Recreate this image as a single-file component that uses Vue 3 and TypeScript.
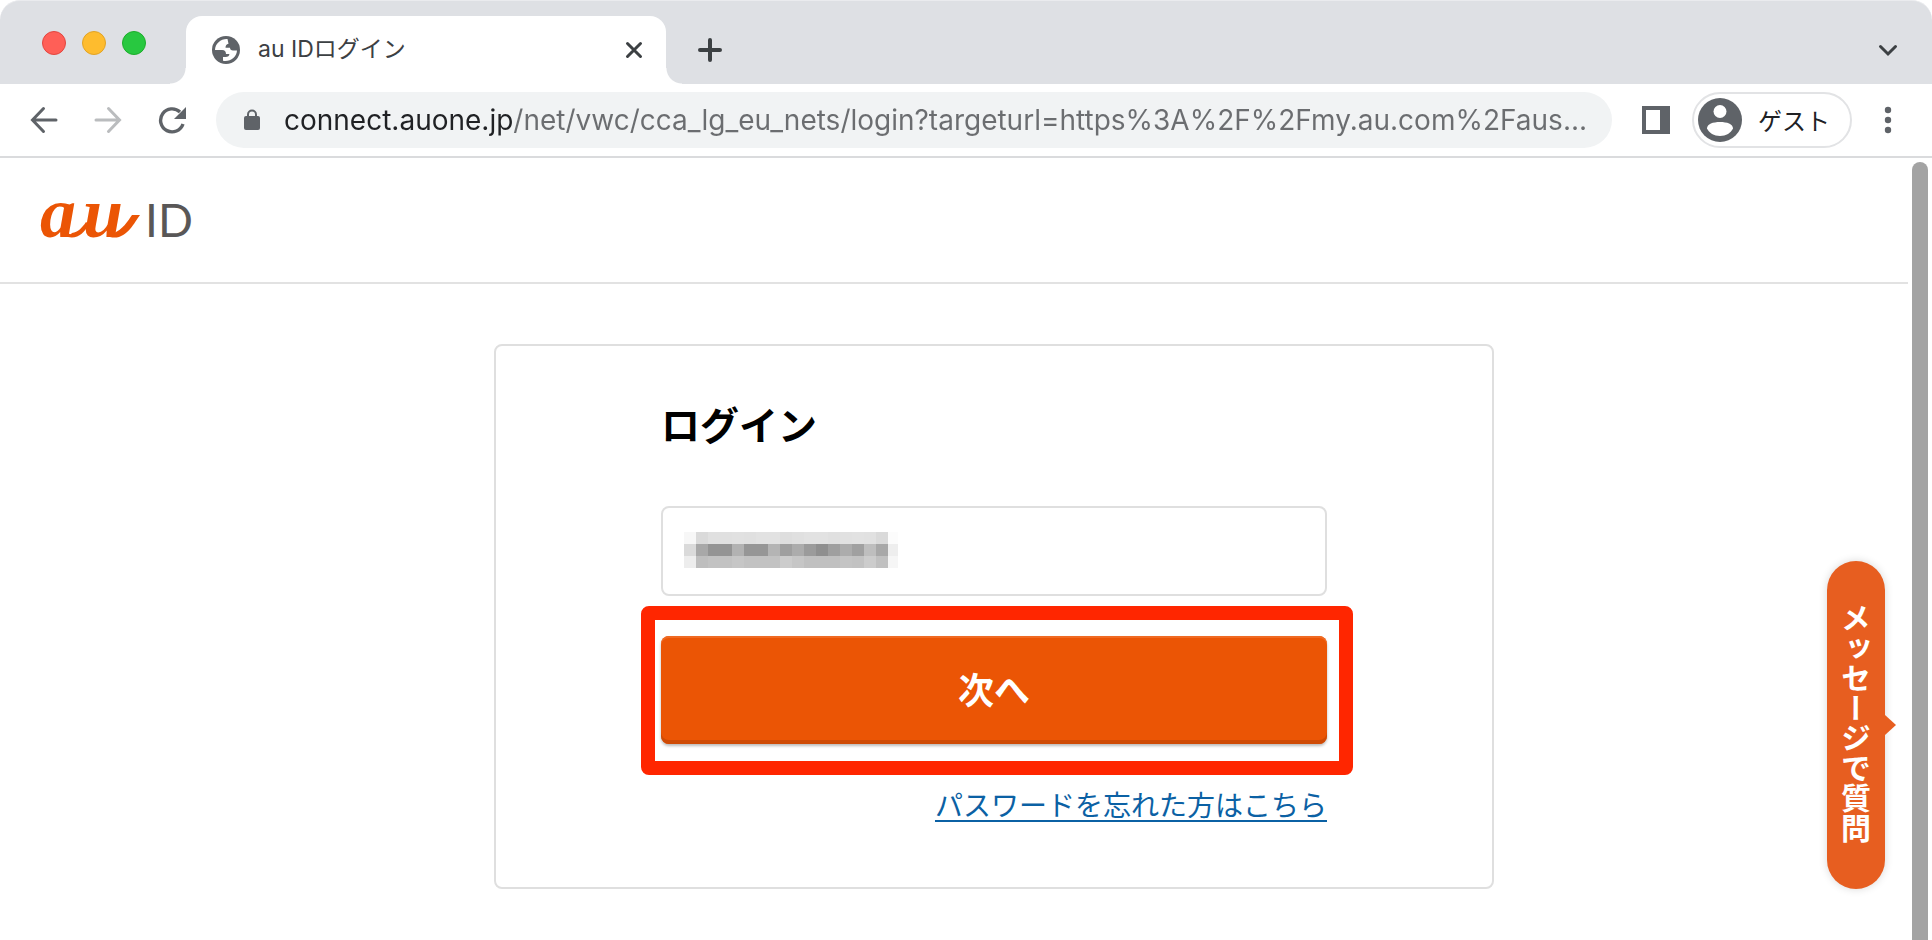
<script setup lang="ts">
import { ref } from 'vue'

const url = ref('connect.auone.jp/net/vwc/cca_lg_eu_nets/login?targeturl=https%3A%2F%2Fmy.au.com%2Faus...')
const loginId = ref('')

// Grey levels of the masked account id, one row of 12px cells per line
const maskRows: number[][] = [
  [247, 218, 224, 224, 225, 224, 226, 226, 222, 224, 226, 226, 224, 225, 226, 225, 218, 252],
  [218, 168, 148, 148, 178, 150, 150, 180, 159, 172, 155, 143, 159, 172, 160, 190, 168, 238],
  [237, 190, 194, 194, 198, 194, 194, 194, 204, 198, 192, 192, 192, 196, 194, 204, 192, 246],
]
const grey = (v: number): string => `rgb(${v},${v},${v})`
</script>

<template>
  <div class="window">
    <div class="tabstrip">
      <div class="lights">
        <button class="light red" aria-label="閉じる"></button>
        <button class="light yellow" aria-label="最小化"></button>
        <button class="light green" aria-label="最大化"></button>
      </div>
      <div class="tab">
        <svg class="globe" viewBox="0 0 28 28" aria-hidden="true">
          <circle cx="14" cy="14" r="14" fill="#5f6368" />
          <path d="M15.5 3C9 2.6 3.2 7.4 3 14h7.2c2.4 0 3.8 1.6 3.8 4h3.4c0 2-1.4 3-3.8 3H11v3.800c7 1.400 13.600-3.600 14-10.300h-4c-1.800 0-3-1-3-2.700h-4.500c0-2.200 1-3.800 3-4z" fill="#fff" />
        </svg>
        <span class="tab-title">au IDログイン</span>
        <button class="plain" aria-label="タブを閉じる">
          <svg width="20" height="20" viewBox="0 0 20 20"><path d="M3.5 3.5l13 13M16.5 3.5l-13 13" fill="none" stroke="#3c4043" stroke-width="3" stroke-linecap="round" /></svg>
        </button>
      </div>
      <button class="plain new-tab" aria-label="新しいタブ">
        <svg width="24" height="24" viewBox="0 0 24 24"><path d="M12 2v20M2 12h20" fill="none" stroke="#3c4043" stroke-width="4" stroke-linecap="round" /></svg>
      </button>
      <button class="plain tab-search" aria-label="タブを検索">
        <svg width="20" height="14" viewBox="0 0 20 14"><path d="M2.5 3.5l7.5 7.5 7.5-7.5" fill="none" stroke="#3c4043" stroke-width="3" stroke-linecap="round" /></svg>
      </button>
    </div>

    <div class="toolbar">
      <button class="plain" aria-label="戻る">
        <svg width="28" height="28" viewBox="0 0 28 28"><path d="M26 14H3M13.5 2.500L2.500 14l11 11.500" fill="none" stroke="#5f6368" stroke-width="3" stroke-linecap="round" /></svg>
      </button>
      <button class="plain" aria-label="進む" disabled>
        <svg width="28" height="28" viewBox="0 0 28 28"><path d="M2 14h23M14.5 2.500L25.500 14l-11 11.500" fill="none" stroke="#babcbe" stroke-width="3" stroke-linecap="round" /></svg>
      </button>
      <button class="plain" aria-label="再読み込み">
        <svg width="28" height="28" viewBox="0 0 28 28"><path d="M22 6A11.500 11.500 0 1 0 25 18" fill="none" stroke="#5f6368" stroke-width="3.400" /><path d="M28 1v12H16z" fill="#5f6368" /></svg>
      </button>
      <label class="omnibox">
        <svg width="16" height="22" viewBox="0 0 16 22" aria-hidden="true"><path d="M4 9V5.500a4 4 0 0 1 8 0V9" fill="none" stroke="#5f6368" stroke-width="2" /><rect y="7" width="16" height="14" rx="2" fill="#5f6368" /></svg>
        <input v-model="url" class="url" type="text" aria-label="アドレス" spellcheck="false" />
      </label>
      <button class="plain panel" aria-label="サイドパネル">
        <svg width="28" height="28" viewBox="0 0 28 28"><path d="M0 0h28v28H0zM4 4v20h14V4z" fill="#5f6368" fill-rule="evenodd" /></svg>
      </button>
      <button class="profile">
        <svg width="44" height="44" viewBox="0 0 44 44" aria-hidden="true"><circle cx="22" cy="22" r="22" fill="#5f6368" /><circle cx="22" cy="13.500" r="6.500" fill="#fff" /><path d="M9 30.500c0-4.500 6-6.500 13-6.500s13 2 13 6.500c-2 4.500-7 7.500-13 7.500s-11-3-13-7.500z" fill="#fff" /></svg>
        <span>ゲスト</span>
      </button>
      <button class="plain menu" aria-label="メニュー">
        <svg width="8" height="28" viewBox="0 0 8 28"><g fill="#5f6368"><circle cx="4" cy="4" r="3.200" /><circle cx="4" cy="14" r="3.200" /><circle cx="4" cy="24" r="3.200" /></g></svg>
      </button>
    </div>

    <div class="viewport">
      <div class="page">
        <header class="site-header">
          <a class="logo" href="#" aria-label="au ID">
            <svg width="180" height="100" viewBox="0 0 180 100">
              <text class="logo-au" x="0 43" y="67">au</text>
              <g fill="#eb5505">
                <path d="M28 67c10 2 16-4 21-13l-3-2c-4 6-8 10-14 11z" />
                <path d="M70 67c16 4 24-14 30-22h-8c-4 6-10 15-18 18z" />
              </g>
              <text class="logo-id" x="105" y="67">ID</text>
            </svg>
          </a>
        </header>
        <main>
          <form class="card" @submit.prevent>
            <h1>ログイン</h1>
            <div class="field">
              <input v-model="loginId" type="text" aria-label="au ID" />
              <svg class="mask" width="214" height="36" viewBox="0 0 214 36" shape-rendering="crispEdges" aria-hidden="true">
                <g v-for="(row, r) in maskRows" :key="r">
                  <rect v-for="(v, c) in row" :key="c" :x="c * 12" :y="r * 12" width="12" height="12" :fill="grey(v)" />
                </g>
              </svg>
            </div>
            <div class="submit-area">
              <button class="submit" type="submit">次へ</button>
            </div>
            <a class="forgot" href="#">パスワードを忘れた方はこちら</a>
          </form>
        </main>
      </div>
      <div class="scrollbar"><div class="thumb"></div></div>
      <button class="chat"><span>メッセージで質問</span></button>
    </div>
  </div>
</template>

<style>
body {
  margin: 0;
  background: #fff;
}
</style>

<style scoped>
* {
  box-sizing: border-box;
}
.window {
  display: flex;
  flex-direction: column;
  min-height: 100vh;
  background: #fff;
  font-family: Inter, "Noto Sans CJK JP", sans-serif;
  color: #000;
}
button {
  font-family: inherit;
  cursor: pointer;
}
svg {
  display: block;
}
.plain {
  display: block;
  padding: 0;
  border: 0;
  background: none;
  flex: none;
}
.tabstrip {
  display: flex;
  align-items: center;
  height: 84px;
  padding: 15px 34px 0 42px;
  background: #dee0e4;
  border-top: 1px solid #eaebee;
  border-radius: 20px 20px 0 0;
}
.lights {
  display: flex;
  gap: 16px;
  width: 144px;
  padding-bottom: 14px;
}
.light {
  width: 24px;
  height: 24px;
  padding: 0;
  border: 1px solid;
  border-radius: 50%;
}
.red {
  background: #ff5f57;
  border-color: #e2463f;
}
.yellow {
  background: #febc2e;
  border-color: #e1a325;
}
.green {
  background: #28c840;
  border-color: #1dad2b;
}
.tab {
  position: relative;
  display: flex;
  align-items: center;
  align-self: stretch;
  width: 480px;
  padding: 0 22px 0 26px;
  background: #fff;
  border-radius: 16px 16px 0 0;
}
.tab::before,
.tab::after {
  content: "";
  position: absolute;
  bottom: 0;
  width: 16px;
  height: 16px;
}
.tab::before {
  right: 100%;
  background: radial-gradient(circle at 0 0, transparent 15px, #fff 16px);
}
.tab::after {
  left: 100%;
  background: radial-gradient(circle at 100% 0, transparent 15px, #fff 16px);
}
.globe {
  width: 28px;
  height: 28px;
}
.tab-title {
  flex: 1;
  padding: 0 0 2px 18px;
  font-size: 23px;
  line-height: 32px;
  color: #3c4043;
}
.new-tab {
  margin-left: 32px;
}
.tab-search {
  margin-left: auto;
}
.toolbar {
  display: flex;
  align-items: center;
  height: 74px;
  padding: 0 40px 0 30px;
  border-bottom: 2px solid #dadbdd;
  gap: 36px;
}
.omnibox {
  display: flex;
  align-items: center;
  flex: 1;
  gap: 24px;
  height: 56px;
  margin-left: -6px;
  padding: 0 20px 0 28px;
  background: #f1f3f4;
  border-radius: 28px;
}
.url {
  flex: 1;
  min-width: 0;
  height: 40px;
  padding: 0;
  border: 0;
  outline: 0;
  font-family: inherit;
  font-size: 28px;
  color: #6b6d70;
  background: linear-gradient(90deg, #202124 229px, #6b6d70 229px);
  background-clip: text;
  -webkit-text-fill-color: transparent;
}
.panel {
  margin-left: -6px;
}
.profile {
  display: flex;
  align-items: center;
  gap: 16px;
  width: 160px;
  height: 56px;
  margin-left: -14px;
  padding: 0 0 0 4px;
  border: 2px solid #e2e3e5;
  border-radius: 28px;
  background: #fff;
  font-size: 24px;
  color: #202124;
}
.profile span {
  padding-bottom: 2px;
}
.menu {
  margin-left: -4px;
}
.viewport {
  position: relative;
  display: flex;
  flex: 1;
}
.page {
  flex: 1;
}
.site-header {
  display: flex;
  align-items: center;
  height: 126px;
  padding-left: 40px;
  border-bottom: 2px solid #e2e2e2;
}
.logo-au {
  font: italic bold 72px "Liberation Serif", serif;
  fill: #eb5505;
}
.logo-id {
  font: 46px Lato, sans-serif;
  fill: #595757;
}
main {
  display: flex;
  justify-content: center;
  padding: 60px 0 40px 80px;
}
.card {
  display: flex;
  flex-direction: column;
  width: 1000px;
  padding: 50px 165px 60px;
  border: 2px solid #dfdfdf;
  border-radius: 8px;
}
h1 {
  margin: 0 0 50px;
  font-size: 39px;
  line-height: 60px;
  font-weight: 700;
}
.field {
  position: relative;
}
.field input {
  display: block;
  width: 100%;
  height: 90px;
  padding: 0 22px;
  border: 2px solid #dfdfdf;
  border-radius: 8px;
  font: 28px Inter, "Noto Sans CJK JP", sans-serif;
  background: #fff;
}
.mask {
  position: absolute;
  left: 23px;
  top: 26px;
}
.submit-area {
  margin: 10px -26px 10px -20px;
  padding: 16px 12px 17px 6px;
  border: 14px solid #ff2600;
  border-radius: 8px;
}
.submit {
  display: block;
  width: 100%;
  height: 108px;
  padding: 0 0 4px;
  border: 0;
  border-radius: 8px;
  background: #eb5505;
  box-shadow: inset 0 2px #f06a22, inset 0 -4px #cf4b06, 0 2px 3px #bbb;
  font-size: 36px;
  font-weight: 700;
  color: #fff;
}
.forgot {
  align-self: flex-end;
  font-size: 28px;
  line-height: 42px;
  color: #0b61a4;
  text-decoration-thickness: 2px;
  text-underline-offset: 4px;
}
.scrollbar {
  width: 24px;
  padding: 4px 4px 0;
}
.thumb {
  width: 16px;
  height: 100%;
  border-radius: 8px 8px 0 0;
  background: #a3a3a3;
}
.chat {
  position: absolute;
  right: 47px;
  bottom: 51px;
  display: flex;
  align-items: center;
  justify-content: center;
  width: 58px;
  height: 328px;
  padding: 0 4px 4px 0;
  border: 0;
  border-radius: 29px;
  background: #e75e20;
  box-shadow: 0 0 8px #d8d8d8;
  font-size: 30px;
  line-height: 30px;
  font-weight: 700;
  color: #fff;
}
.chat::after {
  content: "";
  position: absolute;
  left: 100%;
  top: 154px;
  border: 10px solid transparent;
  border-left: 11px solid #e75e20;
  border-right: 0;
}
.chat span {
  writing-mode: vertical-rl;
}
</style>
